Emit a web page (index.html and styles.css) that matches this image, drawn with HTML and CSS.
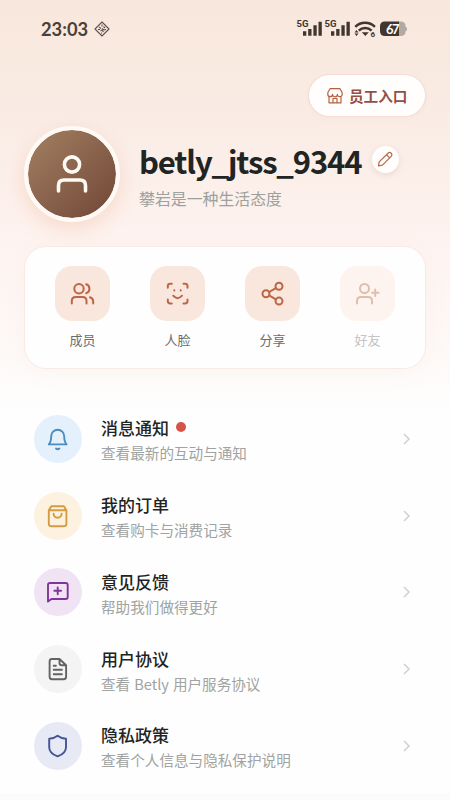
FILE: index.html
```html
<!DOCTYPE html>
<html lang="zh-CN">
<head>
<meta charset="utf-8">
<meta name="viewport" content="width=device-width, initial-scale=1">
<title>个人中心</title>
<link rel="stylesheet" href="styles.css">
</head>
<body>
<main class="screen">
  <header class="status">
    <span class="clock">23:03</span>
    <svg class="tag" width="16" height="16" viewBox="0 0 16 16" fill="none" stroke="#5d534c" stroke-width="1.1" stroke-linejoin="round"><path d="M8 1 15 8 8 15 1 8z"/><path d="M8 3.5v2M5 6l2 1.5M9.500 5.500 11 7M4 8.500h2M8 7.500l2 1.500 2-.5M6.500 10l1.500-1 1.500 2M7.500 12.500v-1"/></svg>
    <svg class="signals" width="112" height="20" viewBox="0 0 112 20">
      <g fill="#40352f">
        <text class="net" x="-.5" y="7.800" textLength="12" lengthAdjust="spacingAndGlyphs">5G</text><text class="net" x="27.500" y="7.800" textLength="12" lengthAdjust="spacingAndGlyphs">5G</text>
        <path d="M6 12.200h3.300v4.600H6zM11.200 10h3.300v6.800h-3.300zM16.400 6.300h3.300v10.500h-3.300zM21.500 2.800h3.300v14h-3.300zM34 12.200h3.300v4.600H34zM39.200 10h3.300v6.800h-3.300zM44.400 6.300h3.300v10.500h-3.300zM49.500 2.800h3.300v14h-3.300z"/>
        <path d="M64.800 13.200h7L68.300 17z"/>
        <path d="M57.500 13.500 59.500 11l2 2.500zM57.500 14.500l2 2.500 2-2.500z"/>
        <text class="gen" x="73.500" y="17.500">6</text>
      </g>
      <g fill="none" stroke="#40352f" stroke-width="2.500"><path d="M58.300 7.800a13.800 13.800 0 0 1 19.600 0M61.800 11.600a9 9 0 0 1 12.800 0"/></g>
      <path fill="#b3a8a2" d="M101 2.500h2.500q5 0 5 4.500v.8q1.500 0 1.500 2.200t-1.500 2.200v.3q0 4.500-5 4.500H101z"/>
      <path fill="#40352f" d="M88 2.500h14V17H88q-5 0-5-5V7.500q0-5 5-5z"/>
      <text class="battery" x="89" y="14.600" textLength="13.500">67</text>
    </svg>
  </header>

  <div class="top">
    <a class="staff">
      <svg width="18" height="18" viewBox="0 0 18 18" fill="none" stroke="#b4603f" stroke-width="1.200" stroke-linejoin="round"><path d="M4 1.700h10l2.200 4v1.500a2.400 2.400 0 0 1-4.800.2 2.400 2.400 0 0 1-4.800 0 2.400 2.400 0 0 1-4.800-.2V5.700zM3 9.500v6.300h12V9.500M7 15.800v-4.300h4v4.300"/></svg>
      <span>员工入口</span>
    </a>
  </div>

  <section class="profile">
    <div class="avatar">
      <svg width="88" height="88" viewBox="0 0 88 88" fill="none" stroke="#fff9f4" stroke-width="3.600" stroke-linecap="round"><circle cx="44" cy="34.500" r="7.600"/><path d="M30.500 61v-5.500q0-5.500 5.500-5.500h16q5.500 0 5.500 5.500V61"/></svg>
    </div>
    <div class="who">
      <div class="name-line">
        <h1>betly_jtss_9344</h1>
        <button class="edit" aria-label="编辑">
          <svg width="27" height="27" viewBox="0 0 27 27" fill="none" stroke="#b96a48" stroke-width="1.250" stroke-linejoin="round"><path d="M6.500 19.800 7.200 15.900 16 7.200a2.200 2.200 0 0 1 3.200 3.200L10.500 19.100zM14.500 8.700l3.200 3.200"/></svg>
        </button>
      </div>
      <p>攀岩是一种生活态度</p>
    </div>
  </section>

  <nav class="card">
    <a class="action"><span class="tile"><svg viewBox="0 0 55 55"><circle cx="24" cy="22.700" r="4.700"/><path d="M16.800 37.500V35q0-4 4-4h6.700q4 0 4 4v2.500M31.200 18.200a4.750 4.750 0 0 1 0 9M35 31.200q3.200 1 3.200 4.300v2"/></svg></span><span>成员</span></a>
    <a class="action"><span class="tile"><svg viewBox="0 0 55 55"><path d="M17.800 21.700v-1.500q0-2.400 2.400-2.400h1.600M33.500 17.800h1.600q2.400 0 2.400 2.400v1.500M37.500 33.600v1.500q0 2.400-2.400 2.400h-1.600M21.800 37.500h-1.600q-2.400 0-2.400-2.400v-1.500M24.300 24.300v.1M30.700 24.300v.1M23.200 29.700q4.300 5 8.800 0"/></svg></span><span>人脸</span></a>
    <a class="action"><span class="tile"><svg viewBox="0 0 55 55"><circle cx="21" cy="27.700" r="3.500"/><circle cx="34" cy="20.300" r="3.500"/><circle cx="34" cy="35.100" r="3.500"/><path d="m24.100 26 6.800-3.900M24.100 29.400l6.800 3.900"/></svg></span><span>分享</span></a>
    <a class="action disabled"><span class="tile"><svg viewBox="0 0 55 55"><circle cx="24.500" cy="22.500" r="4.500"/><path d="M17 37.500V35q0-4 4-4h7q4 0 4 4v2.500M35.200 23.500v6.600M32 26.800h6.600"/></svg></span><span>好友</span></a>
  </nav>

  <section class="menu">
    <a class="row">
      <span class="icon blue"><svg viewBox="0 0 48 48"><path d="M14.800 29.400c2-2.200 2.400-4.400 2.400-8.200a6.500 6.500 0 0 1 13 0c0 3.800.4 6 2.400 8.200zM22 33.500q1.700 1.400 3.400 0"/></svg></span>
      <span class="copy"><strong>消息通知<i class="dot"></i></strong><small>查看最新的互动与通知</small></span>
      <svg class="chevron" viewBox="0 0 8 12"><path d="m1 1 5 5-5 5"/></svg>
    </a>
    <a class="row">
      <span class="icon amber"><svg viewBox="0 0 48 48"><path d="M14.800 18.300 17.300 14.300h12.600l2.500 4v13.500q0 2.500-2.500 2.500H17.300q-2.500 0-2.500-2.500zM14.800 18.300h17.600M19.600 21.800a4 4 0 0 0 8 0"/></svg></span>
      <span class="copy"><strong>我的订单</strong><small>查看购卡与消费记录</small></span>
      <svg class="chevron" viewBox="0 0 8 12"><path d="m1 1 5 5-5 5"/></svg>
    </a>
    <a class="row">
      <span class="icon purple"><svg viewBox="0 0 48 48"><path d="M14 33.600V17q0-2 2-2h15.700q2 0 2 2v12q0 2-2 2H17.500zM23.700 19.400v6.800M20.300 22.800h6.800"/></svg></span>
      <span class="copy"><strong>意见反馈</strong><small>帮助我们做得更好</small></span>
      <svg class="chevron" viewBox="0 0 8 12"><path d="m1 1 5 5-5 5"/></svg>
    </a>
    <a class="row">
      <span class="icon gray"><svg viewBox="0 0 48 48"><path d="M25.500 14H18q-2.400 0-2.400 2.400v15.400q0 2.400 2.400 2.400h11.700q2.400 0 2.400-2.400V20.300zM25.500 14v4q0 2.300 2.300 2.300h4.300M19.700 20.700h2.200M19.700 24.700h8.200M19.700 29.200h8.200"/></svg></span>
      <span class="copy"><strong>用户协议</strong><small class="mixed">查看 Betly 用户服务协议</small></span>
      <svg class="chevron" viewBox="0 0 8 12"><path d="m1 1 5 5-5 5"/></svg>
    </a>
    <a class="row">
      <span class="icon indigo"><svg viewBox="0 0 48 48"><path d="M23.600 13.800q3.600 2.800 8.400 3v8.400c0 4.500-3.200 7.300-8.400 9.200-5.200-1.900-8.400-4.700-8.400-9.200v-8.400q4.800-.2 8.400-3z"/></svg></span>
      <span class="copy"><strong>隐私政策</strong><small>查看个人信息与隐私保护说明</small></span>
      <svg class="chevron" viewBox="0 0 8 12"><path d="m1 1 5 5-5 5"/></svg>
    </a>
  </section>
</main>
</body>
</html>
```
FILE: styles.css
```css
* { box-sizing: border-box; }
body {
  margin: 0;
  color: #222;
  font-family: "Noto Sans CJK SC", sans-serif;
}
.screen {
  height: 800px;
  overflow: hidden;
  background: linear-gradient(180deg, #f8e7dc 0, #f9ebe3 100px, #fdf1ed 215px, #fef4f1 260px, #fdf9f7 350px, #fefefe 410px, #fefefe 793px, #fbfbfb 794px);
}
.status {
  display: flex;
  align-items: center;
  height: 58px;
  padding: 0 41px 0 41px;
}
.clock { font: 700 18.3px/20px Lato, sans-serif; color: #4b3f38; width: 47px; }
.tag { margin-left: 6px; }
.signals { margin-left: auto; overflow: visible; }
.net { font: 700 9px Roboto, sans-serif; }
.gen { font: 700 8px Roboto, sans-serif; }
.battery { font: 700 13px Lato, sans-serif; fill: #fff; }
.top { display: flex; justify-content: flex-end; padding: 17px 25px 0; }
.staff {
  display: flex;
  align-items: center;
  gap: 5px;
  width: 116px;
  height: 41px;
  padding-left: 17px;
  border-radius: 21px;
  background: #fffefd;
  box-shadow: 0 0 0 1px #f3ddd4, 0 2px 5px #dfaa901f;
  color: #925047;
  font-size: 14.6px;
  font-weight: 700;
  line-height: 20px;
}
.staff span { margin-top: 1px; }
.profile { display: flex; height: 131px; padding: 10px 24px 0; }
.avatar {
  width: 96px;
  height: 96px;
  flex: none;
  border: 4px solid #fffaf5;
  border-radius: 50%;
  background: linear-gradient(135deg, #a38061, #704637);
  background-clip: padding-box;
  box-shadow: 0 7px 20px #ee9e7648;
}
.who { padding: 11px 0 0 19px; }
.name-line { display: flex; align-items: center; gap: 11px; height: 46px; }
h1 { margin: 2px 0 0; font-size: 31px; line-height: 46px; font-weight: 700; letter-spacing: -1.13px; color: #202422; white-space: nowrap; }
.edit {
  width: 27px;
  height: 27px;
  padding: 0;
  margin-top: -1px;
  border: 0;
  border-radius: 50%;
  background: #fffefd;
  box-shadow: 0 2px 6px #754b3920;
}
.edit svg { display: block; }
.who p { margin: 4px 0 0; font-size: 15.9px; line-height: 24px; color: #9da09d; font-weight: 400; }
.card {
  display: grid;
  grid-template-columns: repeat(4, 95px);
  justify-content: center;
  height: 121px;
  margin: 0 25px;
  padding-top: 19px;
  border-radius: 21px;
  background: #fffefe;
  box-shadow: 0 0 0 1px #f8ebe5, 0 5px 22px #e9a88b12;
}
.action { display: flex; flex-direction: column; align-items: center; gap: 9px; font-size: 13px; line-height: 20px; color: #696d6b; }
.tile { width: 55px; height: 55px; border-radius: 17px; background: #f9e7dd; }
.tile svg { display: block; fill: none; stroke: #bd6545; stroke-width: 2; stroke-linecap: round; stroke-linejoin: round; }
.disabled { color: #c3c5c4; }
.disabled .tile { background: #fdf4f0; }
.disabled svg { stroke: #e1bdad; }
.menu { padding: 32.4px 34px 0; }
.row { display: flex; align-items: center; height: 76.8px; }
.icon { width: 48px; height: 48px; border-radius: 50%; flex: none; }
.icon svg { display: block; fill: none; stroke: currentColor; stroke-width: 1.9; stroke-linecap: round; stroke-linejoin: round; }
.blue { color: #4b8cbe; background: #e4f1fc; }
.amber { color: #d59b43; background: #fdf1e0; }
.purple { color: #81359a; background: #f0e3f4; }
.gray { color: #636363; background: #f4f4f4; }
.indigo { color: #455295; background: #e7e9f5; }
.copy { flex: 1; margin-left: 19px; padding-top: 2px; }
.copy strong, .copy small { display: block; font-weight: 400; white-space: nowrap; }
.copy strong { display: flex; align-items: center; height: 25px; font-size: 17px; line-height: 25px; font-weight: 500; color: #222423; }
.copy small { margin-top: 1px; font-size: 14.6px; line-height: 23px; color: #a0a3a1; }
.copy .mixed { word-spacing: .7px; }
.dot { width: 10px; height: 10px; margin: -1px 0 0 7px; border-radius: 50%; background: #d55348; }
.chevron { width: 8px; height: 12px; margin-right: 5px; fill: none; stroke: #d0d0d0; stroke-width: 1.5; }
```
